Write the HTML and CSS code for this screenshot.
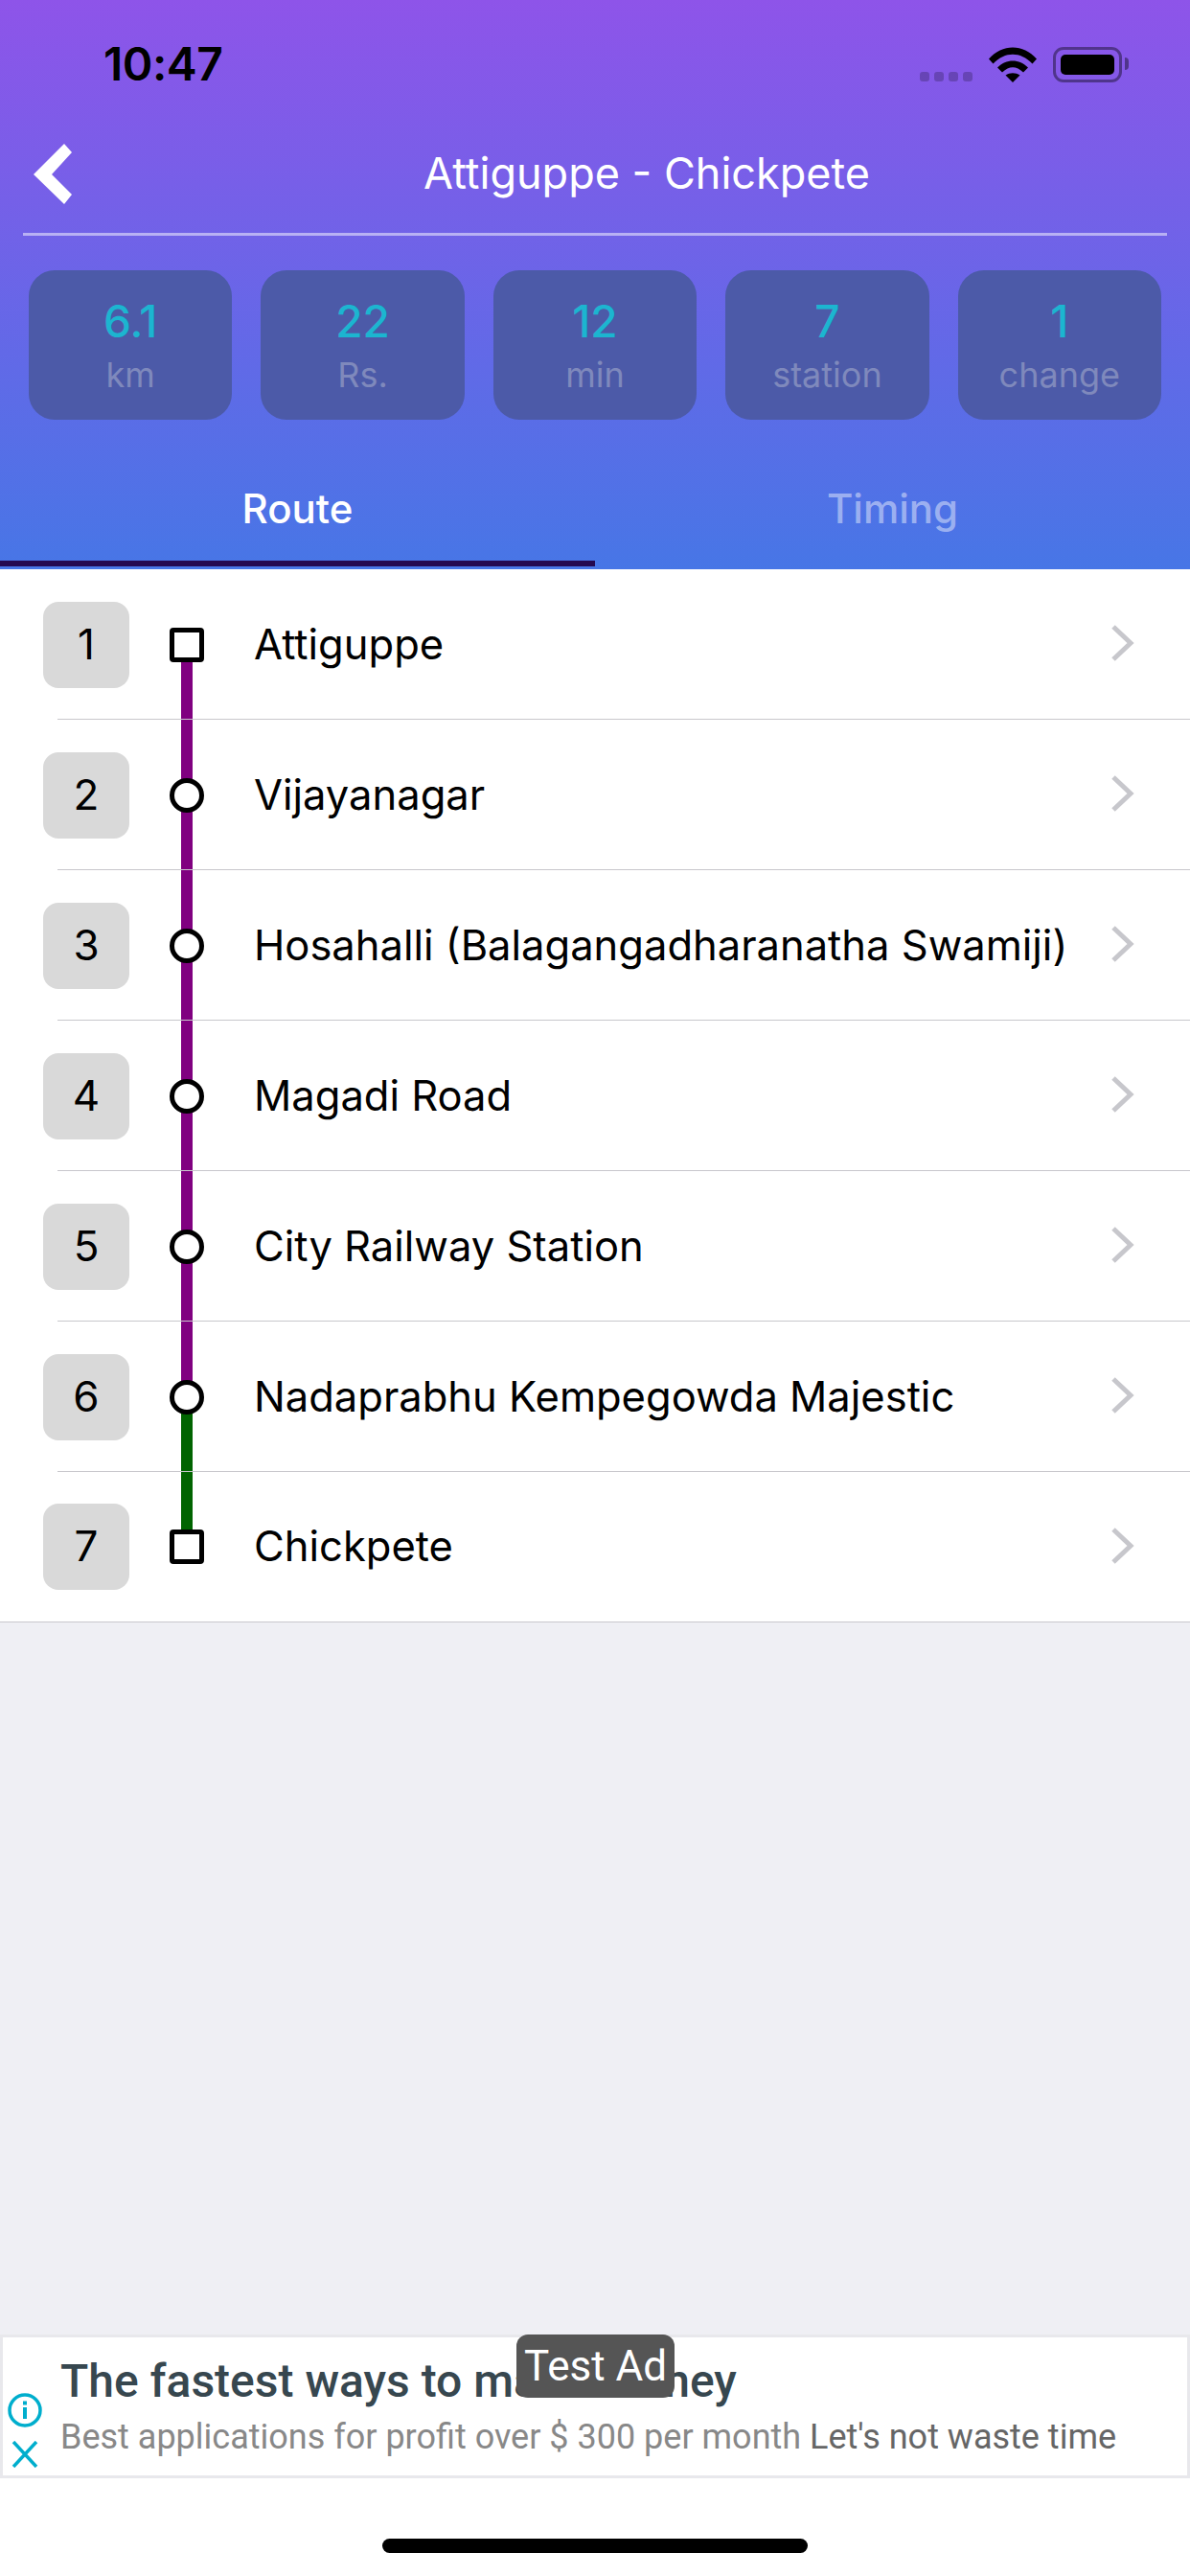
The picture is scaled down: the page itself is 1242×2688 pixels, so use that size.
FILE: index.html
```html
<!DOCTYPE html>
<html lang="en">
<head>
    <meta charset="UTF-8">
    <meta name="viewport" content="width=device-width, initial-scale=1.0">
    <title>Attiguppe - Chickpete</title>
    <link rel="stylesheet" href="styles.css">
</head>
<body>
    <header class="header">
        <div class="statusbar">
            <div class="time">10:47</div>
            <div class="status-icons">
                <div class="signal"><span></span><span></span><span></span><span></span></div>
                <svg class="wifi" width="50" height="37" viewBox="0 0 50 37">
                    <path d="M0 12.5C14-3.5 36-3.5 50 12.500L45.500 17.500C33 4.500 17 4.500 4.500 17.500Z"/>
                    <path d="M9 21.500C18 12 32 12 41 21.500L36 26.500C28.500 19.500 21.500 19.500 14 26.500Z"/>
                    <path d="M17.500 29.500C22 26.500 28 26.500 32.500 29.500L25 37Z"/>
                </svg>
                <div class="battery"><div class="battery-fill"></div></div>
            </div>
        </div>
        <div class="navbar">
            <svg class="back" width="40" height="63" viewBox="0 0 40 63">
                <path d="M32 0L40 9L19 32L40 53L32 63L0 32Z"/>
            </svg>
            <div class="title">Attiguppe - Chickpete</div>
        </div>
        <div class="stats">
            <div class="stat"><div class="stat-value">6.1</div><div class="stat-label">km</div></div>
            <div class="stat"><div class="stat-value">22</div><div class="stat-label">Rs.</div></div>
            <div class="stat"><div class="stat-value">12</div><div class="stat-label">min</div></div>
            <div class="stat"><div class="stat-value">7</div><div class="stat-label">station</div></div>
            <div class="stat"><div class="stat-value">1</div><div class="stat-label">change</div></div>
        </div>
        <div class="tabs">
            <div class="tab active">Route</div>
            <div class="tab">Timing</div>
        </div>
    </header>

    <main class="content">
        <ul class="stations">
            <li class="row">
                <div class="badge">1</div>
                <div class="node-col"><i class="seg seg-bottom purple"></i><i class="node square"></i></div>
                <div class="name">Attiguppe</div>
                <svg class="chevron" width="26" height="40" viewBox="0 0 26 40"><path d="M3 3L21 20L3 37"/></svg>
            </li>
            <li class="row">
                <div class="badge">2</div>
                <div class="node-col"><i class="seg seg-top purple"></i><i class="seg seg-bottom purple"></i><i class="node"></i></div>
                <div class="name">Vijayanagar</div>
                <svg class="chevron" width="26" height="40" viewBox="0 0 26 40"><path d="M3 3L21 20L3 37"/></svg>
            </li>
            <li class="row">
                <div class="badge">3</div>
                <div class="node-col"><i class="seg seg-top purple"></i><i class="seg seg-bottom purple"></i><i class="node"></i></div>
                <div class="name">Hosahalli (Balagangadharanatha Swamiji)</div>
                <svg class="chevron" width="26" height="40" viewBox="0 0 26 40"><path d="M3 3L21 20L3 37"/></svg>
            </li>
            <li class="row">
                <div class="badge">4</div>
                <div class="node-col"><i class="seg seg-top purple"></i><i class="seg seg-bottom purple"></i><i class="node"></i></div>
                <div class="name">Magadi Road</div>
                <svg class="chevron" width="26" height="40" viewBox="0 0 26 40"><path d="M3 3L21 20L3 37"/></svg>
            </li>
            <li class="row">
                <div class="badge">5</div>
                <div class="node-col"><i class="seg seg-top purple"></i><i class="seg seg-bottom purple"></i><i class="node"></i></div>
                <div class="name">City Railway Station</div>
                <svg class="chevron" width="26" height="40" viewBox="0 0 26 40"><path d="M3 3L21 20L3 37"/></svg>
            </li>
            <li class="row">
                <div class="badge">6</div>
                <div class="node-col"><i class="seg seg-top purple"></i><i class="seg seg-bottom green"></i><i class="node"></i></div>
                <div class="name">Nadaprabhu Kempegowda Majestic</div>
                <svg class="chevron" width="26" height="40" viewBox="0 0 26 40"><path d="M3 3L21 20L3 37"/></svg>
            </li>
            <li class="row last">
                <div class="badge">7</div>
                <div class="node-col"><i class="seg seg-top green"></i><i class="node square"></i></div>
                <div class="name">Chickpete</div>
                <svg class="chevron" width="26" height="40" viewBox="0 0 26 40"><path d="M3 3L21 20L3 37"/></svg>
            </li>
        </ul>
    </main>

    <div class="ad">
        <div class="ad-icons">
            <svg width="36" height="36" viewBox="0 0 36 36">
                <circle cx="18" cy="18" r="16" fill="none" stroke-width="3.500"/>
                <rect x="16" y="15" width="4" height="12" stroke="none"/>
                <rect x="16" y="8.500" width="4" height="4" stroke="none"/>
            </svg>
            <svg width="28" height="28" viewBox="0 0 28 28">
                <path d="M2 1L26 27M26 1L2 27" fill="none" stroke-width="3.500"/>
            </svg>
        </div>
        <div class="ad-text">
            <div class="ad-head">The fastest ways to make money</div>
            <div class="ad-sub">Best applications for profit over $ 300 per month <span class="ad-cta">Let's not waste time</span></div>
        </div>
        <div class="ad-tag">Test Ad</div>
    </div>

    <div class="home-area"><div class="home-bar"></div></div>
</body>
</html>
```

FILE: styles.css
```css
* {
    box-sizing: border-box;
}

body {
    margin: 0;
    width: 1242px;
    height: 2688px;
    display: flex;
    flex-direction: column;
    font-family: Inter, "Noto Sans", sans-serif;
    background-color: #efeff4;
    color: #000;
    overflow: hidden;
}

/* Header */
.header {
    height: 594px;
    flex-shrink: 0;
    background: linear-gradient(180deg, #8e54e9 0%, #4776e6 100%);
    display: flex;
    flex-direction: column;
}

.statusbar {
    height: 134px;
    padding: 42px 71px 0 108px;
    display: flex;
    justify-content: space-between;
    align-items: flex-start;
}

.time {
    font-size: 48px;
    line-height: 50px;
    font-weight: 600;
    letter-spacing: -0.5px;
}

.status-icons {
    display: flex;
    align-items: flex-end;
    margin-top: 7px;
}

.signal {
    display: flex;
    gap: 5px;
    margin-right: 17px;
    margin-bottom: 1px;
}

.signal span {
    width: 10px;
    height: 10px;
    border-radius: 3px;
    background-color: rgba(0, 0, 0, 0.22);
}

.wifi {
    margin-right: 17px;
}

.battery {
    position: relative;
    width: 72px;
    height: 37px;
    padding: 5px;
    border: 3px solid rgba(0, 0, 0, 0.4);
    border-radius: 11px;
}

.battery::after {
    content: "";
    position: absolute;
    right: -10px;
    top: 8px;
    width: 4px;
    height: 13px;
    border-radius: 0 6px 6px 0;
    background-color: rgba(0, 0, 0, 0.4);
}

.battery-fill {
    height: 100%;
    background-color: #000;
    border-radius: 5px;
}

.navbar {
    height: 112px;
    margin: 0 24px;
    padding-left: 11px;
    display: flex;
    align-items: flex-start;
    border-bottom: 3px solid rgba(255, 255, 255, 0.5);
}

.back {
    margin-top: 16px;
    flex-shrink: 0;
    fill: #fff;
}

.title {
    flex: 1;
    margin: 20px 0 0 57px;
    text-align: center;
    color: #fff;
    font-size: 45px;
    line-height: 54px;
}

/* Summary cards */
.stats {
    margin-top: 36px;
    padding: 0 30px;
    display: grid;
    grid-template-columns: repeat(5, 1fr);
    gap: 30px;
}

.stat {
    height: 156px;
    border-radius: 27px;
    background-color: #4c5aa8;
    text-align: center;
    padding-top: 26px;
}

.stat-value {
    font-size: 46px;
    line-height: 54px;
    font-weight: 500;
    color: #1cb5d0;
}

.stat-label {
    font-size: 36px;
    line-height: 58px;
    color: #7f89bc;
}

/* Tabs */
.tabs {
    margin-top: auto;
    display: flex;
    height: 118px;
    padding-bottom: 3px;
}

.tab {
    width: 50%;
    text-align: center;
    font-size: 42px;
    line-height: 48px;
    padding-top: 31px;
    font-weight: 500;
    color: rgba(255, 255, 255, 0.45);
}

.tab.active {
    color: #fff;
    border-bottom: 6px solid #24084f;
}

/* Station list */
.content {
    flex: 1;
}

.stations {
    list-style: none;
    margin: 0;
    padding: 0;
    background-color: #fff;
    border-bottom: 1px solid #c8c7cc;
}

.row {
    position: relative;
    height: 157px;
    padding: 0 57px 0 45px;
    display: flex;
    align-items: center;
}

.row::after {
    content: "";
    position: absolute;
    left: 60px;
    right: 0;
    bottom: 0;
    height: 1px;
    background-color: #c8c7cc;
}

.row.last {
    height: 156px;
}

.row.last::after {
    display: none;
}

.badge {
    width: 90px;
    height: 90px;
    flex-shrink: 0;
    border-radius: 16px;
    background-color: #d9d9d9;
    text-align: center;
    font-size: 44px;
    line-height: 88px;
}

.node-col {
    position: relative;
    width: 36px;
    height: 100%;
    flex-shrink: 0;
    margin-left: 42px;
    display: flex;
    align-items: center;
}

.seg {
    position: absolute;
    left: 12px;
    width: 12px;
    height: 50%;
}

.seg-top {
    top: 0;
}

.seg-bottom {
    bottom: 0;
}

.purple {
    background-color: #800080;
}

.green {
    background-color: #006400;
}

.node {
    position: relative;
    width: 36px;
    height: 36px;
    border: 5px solid #000;
    border-radius: 50%;
    background-color: #fff;
}

.node.square {
    border-radius: 4px;
}

.name {
    flex: 1;
    margin-left: 52px;
    padding-bottom: 2px;
    font-size: 43.5px;
    white-space: nowrap;
}

.chevron {
    flex-shrink: 0;
    margin-bottom: 3px;
    fill: none;
    stroke: #c7c7cc;
    stroke-width: 5;
}

/* Ad banner */
.ad {
    position: relative;
    height: 150px;
    flex-shrink: 0;
    background-color: #fff;
    border: 3px solid #e8e8ec;
    display: flex;
    font-family: Roboto, sans-serif;
}

.ad-icons {
    width: 60px;
    padding: 58px 0 0 5px;
    display: flex;
    flex-direction: column;
    align-items: flex-start;
    gap: 14px;
    fill: #00aecd;
    stroke: #00aecd;
}

.ad-icons svg:last-child {
    margin-left: 4px;
}

.ad-head {
    margin-top: 19px;
    font-size: 48px;
    line-height: 54px;
    font-weight: 500;
    color: #37474f;
    white-space: nowrap;
}

.ad-sub {
    margin-top: 9px;
    font-size: 36px;
    line-height: 44px;
    color: #888;
    white-space: nowrap;
}

.ad-cta {
    color: #666;
}

.ad-tag {
    position: absolute;
    left: 536px;
    top: -3px;
    width: 165px;
    height: 66px;
    border-radius: 12px;
    background-color: #555;
    color: #fff;
    text-align: center;
    font-size: 44px;
    line-height: 66px;
}

/* Home indicator */
.home-area {
    height: 102px;
    flex-shrink: 0;
    background-color: #fff;
    padding-top: 63px;
}

.home-bar {
    width: 444px;
    height: 15px;
    margin: 0 auto;
    border-radius: 8px;
    background-color: #000;
}
```
